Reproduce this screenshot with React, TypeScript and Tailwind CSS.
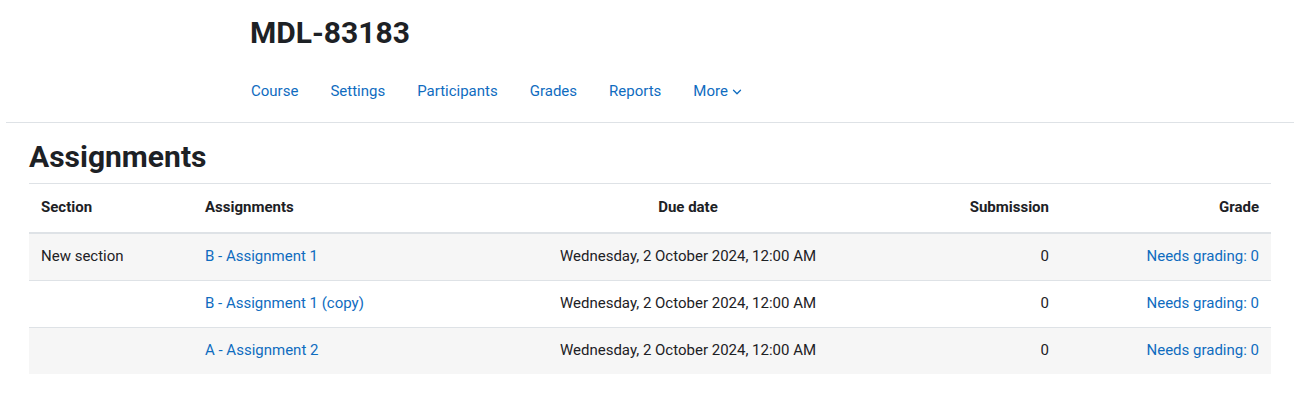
import { ChevronDown } from "lucide-react";

const navItems = ["Course", "Settings", "Participants", "Grades", "Reports"];

const rows = [
	{ section: "New section", name: "B - Assignment 1" },
	{ section: "", name: "B - Assignment 1 (copy)" },
	{ section: "", name: "A - Assignment 2" },
];

const due = "Wednesday, 2 October 2024, 12:00 AM";

export default function App() {
	return (
		<div className="min-h-[398px] bg-white font-['Roboto',sans-serif] text-[15px] text-[#1d2125]">
			{/* course header + secondary nav */}
			<div className="mx-[6px] border-b border-[#dee2e6]">
				<div className="pl-[244px]">
					<h1 className="pt-[13px] font-bold text-[30px] leading-[40px]">
						MDL-83183
					</h1>
					<nav className="mt-[19px] flex items-center pb-[12px]">
						{navItems.map((item) => (
							<a
								key={item}
								href="#"
								className="px-4 py-2 leading-[22px] text-[#0f6cbf] first:pl-[1px]"
							>
								{item}
							</a>
						))}
						<a
							href="#"
							className="flex items-center gap-[2px] px-4 py-2 leading-[22px] text-[#0f6cbf]"
						>
							More
							<ChevronDown className="mt-[2px] size-[14px]" strokeWidth={2.25} />
						</a>
					</nav>
				</div>
			</div>

			<div className="px-[29px]">
				<h2 className="pt-[16px] pb-[8px] font-bold text-[30px] leading-[36px]">
					Assignments
				</h2>
				<table className="w-full table-fixed border-collapse">
					<colgroup>
						<col className="w-[164px]" />
						<col className="w-[345px]" />
						<col className="w-[300px]" />
						<col className="w-[223px]" />
						<col className="w-[210px]" />
					</colgroup>
					<thead>
						<tr className="border-t border-b-2 border-[#dee2e6] font-bold">
							<th className="px-3 pt-[12px] pb-[14px] text-left leading-[22px]">Section</th>
							<th className="px-3 pt-[12px] pb-[14px] text-left leading-[22px]">Assignments</th>
							<th className="px-3 pt-[12px] pb-[14px] text-center leading-[22px]">Due date</th>
							<th className="px-3 pt-[12px] pb-[14px] text-right leading-[22px]">Submission</th>
							<th className="px-3 pt-[12px] pb-[14px] text-right leading-[22px]">Grade</th>
						</tr>
					</thead>
					<tbody>
						{rows.map((r, i) => (
							<tr
								key={r.name}
								className={`${i % 2 === 0 ? "bg-[#f6f6f6]" : "bg-white"} ${
									i < rows.length - 1 ? "border-b border-[#dee2e6]" : ""
								}`}
							>
								<td className="px-3 pt-[11px] pb-[13px] leading-[22px]">{r.section}</td>
								<td className="px-3 pt-[11px] pb-[13px] leading-[22px]">
									<a href="#" className="text-[#0f6cbf]">
										{r.name}
									</a>
								</td>
								<td className="px-3 pt-[11px] pb-[13px] text-center leading-[22px]">{due}</td>
								<td className="px-3 pt-[11px] pb-[13px] text-right leading-[22px]">0</td>
								<td className="px-3 pt-[11px] pb-[13px] text-right leading-[22px]">
									<a href="#" className="text-[#0f6cbf]">
										Needs grading: 0
									</a>
								</td>
							</tr>
						))}
					</tbody>
				</table>
			</div>
		</div>
	);
}
